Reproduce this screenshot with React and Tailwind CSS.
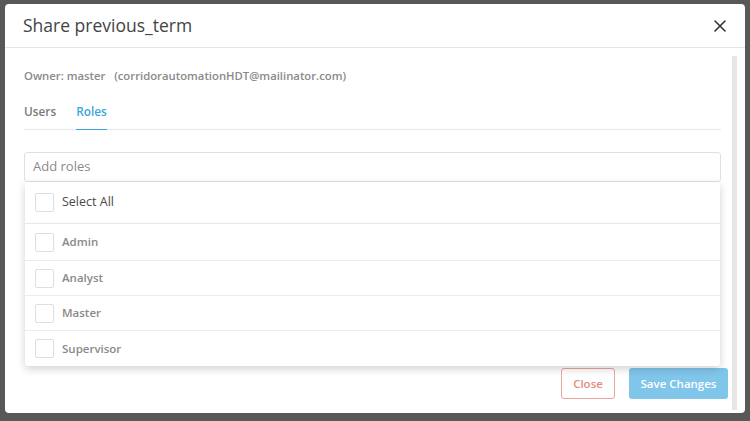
import React from "react";

const roles = ["Admin", "Analyst", "Master", "Supervisor"];

function Box() {
  return <span className="block w-[19px] h-[19px] border border-[#dedede] rounded-[2px] bg-white shrink-0" />;
}

export default function App() {
  return (
    <div className="w-[750px] h-[421px] bg-[#585858] pt-[4px] pl-[5px] overflow-hidden" style={{ fontFamily: '"Open Sans", sans-serif' }}>
      <div className="relative w-[740px] h-[409px] bg-white rounded-[4px] flex flex-col">
        <div className="h-[44px] border-b border-[#e6e6e6] flex items-center justify-between pl-[18px] pr-[19px] shrink-0">
          <span className="text-[17.5px] text-[#444] leading-none">Share previous_term</span>
          <svg width="12" height="12" viewBox="0 0 12 12" className="mt-[1px]">
            <path d="M1 1L11 11M11 1L1 11" stroke="#333" strokeWidth="1.6" strokeLinecap="round" />
          </svg>
        </div>
        <div className="absolute right-[8px] top-[52px] bottom-[3px] w-[5px] bg-[#e6e6e6]" />
        <div className="flex-1 flex flex-col pl-[19px] pr-[24px]">
          <div className="mt-[20px] text-[11.3px] font-semibold text-[#8a8a8a] leading-[16px]">
            Owner: master&nbsp;&nbsp; (corridorautomationHDT@mailinator.com)
          </div>
          <div className="mt-[19px] flex border-b border-[#e8e8e8] text-[11.8px] font-semibold leading-[16px]">
            <span className="text-[#7a7a7a] pb-[10px]">Users</span>
            <span className="ml-[20px] text-[#3aa6dc] pb-[9px] border-b-[1.5px] border-[#3aa6dc] mb-[-1px]">Roles</span>
          </div>
          <div className="relative mt-[22px]">
            <div className="h-[30px] border border-[#e0e0e0] rounded-[3px] flex items-center pl-[8px] text-[13px] text-[#8a8a8a]">
              Add roles
            </div>
            <div className="absolute left-[1px] right-[1px] top-[30px] bg-white rounded-[3px] shadow-[0_3px_8px_rgba(0,0,0,0.18)] z-10">
              <div className="h-[42px] flex items-center pl-[10px] border-b border-[#e8e8e8]">
                <Box />
                <span className="ml-[8px] text-[12.5px] text-[#4a4a4a]">Select All</span>
              </div>
              {roles.map((r, i) => (
                <div key={r} className={`flex items-center pl-[10px] ${i < roles.length - 1 ? "border-b border-[#ececec]" : ""} ${i === 0 ? "h-[37px]" : "h-[35px]"}`}>
                  <Box />
                  <span className="ml-[8px] text-[11.5px] font-semibold text-[#8a8a8a]">{r}</span>
                </div>
              ))}
            </div>
          </div>
        </div>
        <div className="flex justify-end gap-[14px] pr-[17px] pb-[14px]">
          <button className="w-[54px] h-[31px] border border-[#e9a59d] rounded-[3px] text-[11.5px] font-semibold text-[#e48b80] bg-white">Close</button>
          <button className="w-[99px] h-[31px] rounded-[3px] text-[11.5px] font-semibold text-white bg-[#80c5ea]">Save Changes</button>
        </div>
      </div>
    </div>
  );
}
